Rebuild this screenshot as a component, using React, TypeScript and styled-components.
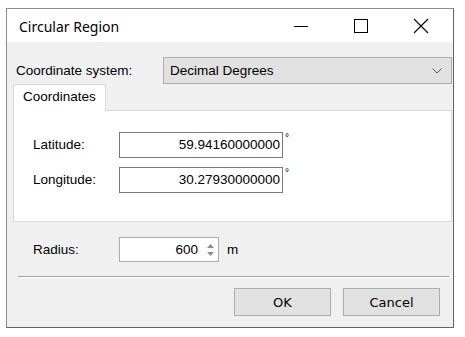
import React from "react";
import styled, { createGlobalStyle } from "styled-components";

const Global = createGlobalStyle`
  html, body { margin: 0; padding: 0; background: #ffffff; }
  body { font-family: "Liberation Sans", Arial, sans-serif; }
`;

const Page = styled.div`
  padding: 8px 0 0 6px;
`;

const Window = styled.div`
  width: 446px;
  height: 318px;
  border: 1px solid #8c8c8c;
  border-right-color: #5f6266;
  border-bottom-color: #5f6266;
  background: #f0f0f0;
  display: flex;
  flex-direction: column;
  box-sizing: content-box;
`;

const TitleBar = styled.div`
  height: 33px;
  background: #ffffff;
  display: flex;
  align-items: center;
  padding-left: 12px;
  padding-right: 2px;
  flex: none;
`;

const Title = styled.div`
  font-family: "Noto Sans", "Open Sans", sans-serif;
  font-size: 14px;
  color: #000;
  flex: 1;
  padding-top: 1px;
`;

const Caption = styled.div`
  width: 60px;
  height: 33px;
  display: flex;
  align-items: center;
  justify-content: center;
`;

const Body = styled.div`
  flex: 1;
  display: flex;
  flex-direction: column;
  padding: 15px 1px 0 6px;
  font-size: 13.5px;
  color: #000;
`;

const SystemRow = styled.div`
  display: flex;
  align-items: center;
  height: 27px;
`;

const SystemLabel = styled.div`
  width: 152px;
  padding-left: 3px;
`;

const Combo = styled.div`
  width: 281px;
  height: 25px;
  border: 1px solid #adadad;
  background: #e1e1e1;
  display: flex;
  align-items: center;
  padding: 0 9px 0 6px;
  box-sizing: content-box;
  justify-content: space-between;
`;

const Tabs = styled.div`
  display: flex;
  flex-direction: column;
  width: 439px;
`;

const TabStrip = styled.div`
  display: flex;
  height: 26px;
`;

const Tab = styled.div`
  width: 93px;
  height: 27px;
  box-sizing: border-box;
  border: 1px solid #d9d9d9;
  border-bottom: none;
  background: #ffffff;
  padding: 4px 0 0 9px;
  position: relative;
  z-index: 1;
`;

const Panel = styled.div`
  height: 112px;
  box-sizing: border-box;
  border: 1px solid #d9d9d9;
  background: #ffffff;
  padding: 20px 0 0 19px;
  display: flex;
  flex-direction: column;
  gap: 8px;
`;

const FieldRow = styled.div`
  display: flex;
  align-items: center;
  height: 27px;
`;

const FieldLabel = styled.div`
  width: 86px;
  flex: none;
`;

const TextBox = styled.div`
  width: 164px;
  height: 26px;
  box-sizing: border-box;
  border: 1px solid #7a7a7a;
  background: #fff;
  display: flex;
  align-items: center;
  justify-content: flex-end;
  padding-right: 2px;
`;

const Degree = styled.div`
  align-self: flex-start;
  font-size: 10px;
  margin-left: 2px;
  margin-top: 1px;
  line-height: 12px;
`;

const RadiusRow = styled.div`
  display: flex;
  align-items: center;
  height: 25px;
  margin-top: 15px;
  padding-left: 20px;
`;

const SpinBox = styled.div`
  width: 100px;
  height: 25px;
  box-sizing: border-box;
  border: 1px solid #adadad;
  background: #fff;
  display: flex;
  align-items: center;
  justify-content: flex-end;
`;

const SpinValue = styled.span`
  margin-right: 6px;
`;

const SpinArrows = styled.div`
  width: 12px;
  height: 100%;
  display: flex;
  flex-direction: column;
  align-items: center;
  justify-content: center;
  gap: 4px;
  margin-right: 2px;
`;

const Unit = styled.div`
  margin-left: 8px;
`;

const Separator = styled.div`
  height: 0;
  border-top: 1px solid #a0a0a0;
  border-bottom: 1px solid #ffffff;
  margin: 14px 3px 0 5px;
`;

const ButtonRow = styled.div`
  display: flex;
  justify-content: flex-end;
  gap: 12px;
  margin-top: 10px;
  padding-right: 12px;
`;

const Button = styled.div`
  width: 97px;
  height: 28px;
  box-sizing: border-box;
  border: 1px solid #adadad;
  background: #e1e1e1;
  display: flex;
  align-items: center;
  justify-content: center;
  font-family: "DejaVu Sans", "Liberation Sans", sans-serif;
  font-size: 13px;
`;

const Tri = ({ up }: { up?: boolean }) => (
  <svg width="7" height="4" viewBox="0 0 7 4">
    <path d={up ? "M0 4 L3.5 0 L7 4 Z" : "M0 0 L3.5 4 L7 0 Z"} fill="#8a8a8a" />
  </svg>
);

export default function App() {
  return (
    <>
      <Global />
      <Page>
        <Window>
          <TitleBar>
            <Title>Circular Region</Title>
            <Caption>
              <svg width="16" height="16" viewBox="0 0 16 16">
                <path d="M1 8.5 H15" stroke="#000" strokeWidth="1" />
              </svg>
            </Caption>
            <Caption>
              <svg width="16" height="16" viewBox="0 0 16 16">
                <rect x="1.5" y="1.5" width="13" height="13" fill="none" stroke="#000" strokeWidth="1" />
              </svg>
            </Caption>
            <Caption>
              <svg width="16" height="16" viewBox="0 0 16 16">
                <path d="M1 1 L15 15 M15 1 L1 15" stroke="#000" strokeWidth="1.1" />
              </svg>
            </Caption>
          </TitleBar>
          <Body>
            <SystemRow>
              <SystemLabel>Coordinate system:</SystemLabel>
              <Combo>
                <span>Decimal Degrees</span>
                <svg width="10" height="6" viewBox="0 0 10 6">
                  <path d="M0.5 0.5 L5 5 L9.5 0.5" fill="none" stroke="#555" strokeWidth="1" />
                </svg>
              </Combo>
            </SystemRow>
            <Tabs>
              <TabStrip>
                <Tab>Coordinates</Tab>
              </TabStrip>
              <Panel>
                <FieldRow>
                  <FieldLabel>Latitude:</FieldLabel>
                  <TextBox>59.94160000000</TextBox>
                  <Degree>°</Degree>
                </FieldRow>
                <FieldRow>
                  <FieldLabel>Longitude:</FieldLabel>
                  <TextBox>30.27930000000</TextBox>
                  <Degree>°</Degree>
                </FieldRow>
              </Panel>
            </Tabs>
            <RadiusRow>
              <FieldLabel>Radius:</FieldLabel>
              <SpinBox>
                <SpinValue>600</SpinValue>
                <SpinArrows>
                  <Tri up />
                  <Tri />
                </SpinArrows>
              </SpinBox>
              <Unit>m</Unit>
            </RadiusRow>
            <Separator />
            <ButtonRow>
              <Button>OK</Button>
              <Button>Cancel</Button>
            </ButtonRow>
          </Body>
        </Window>
      </Page>
    </>
  );
}
